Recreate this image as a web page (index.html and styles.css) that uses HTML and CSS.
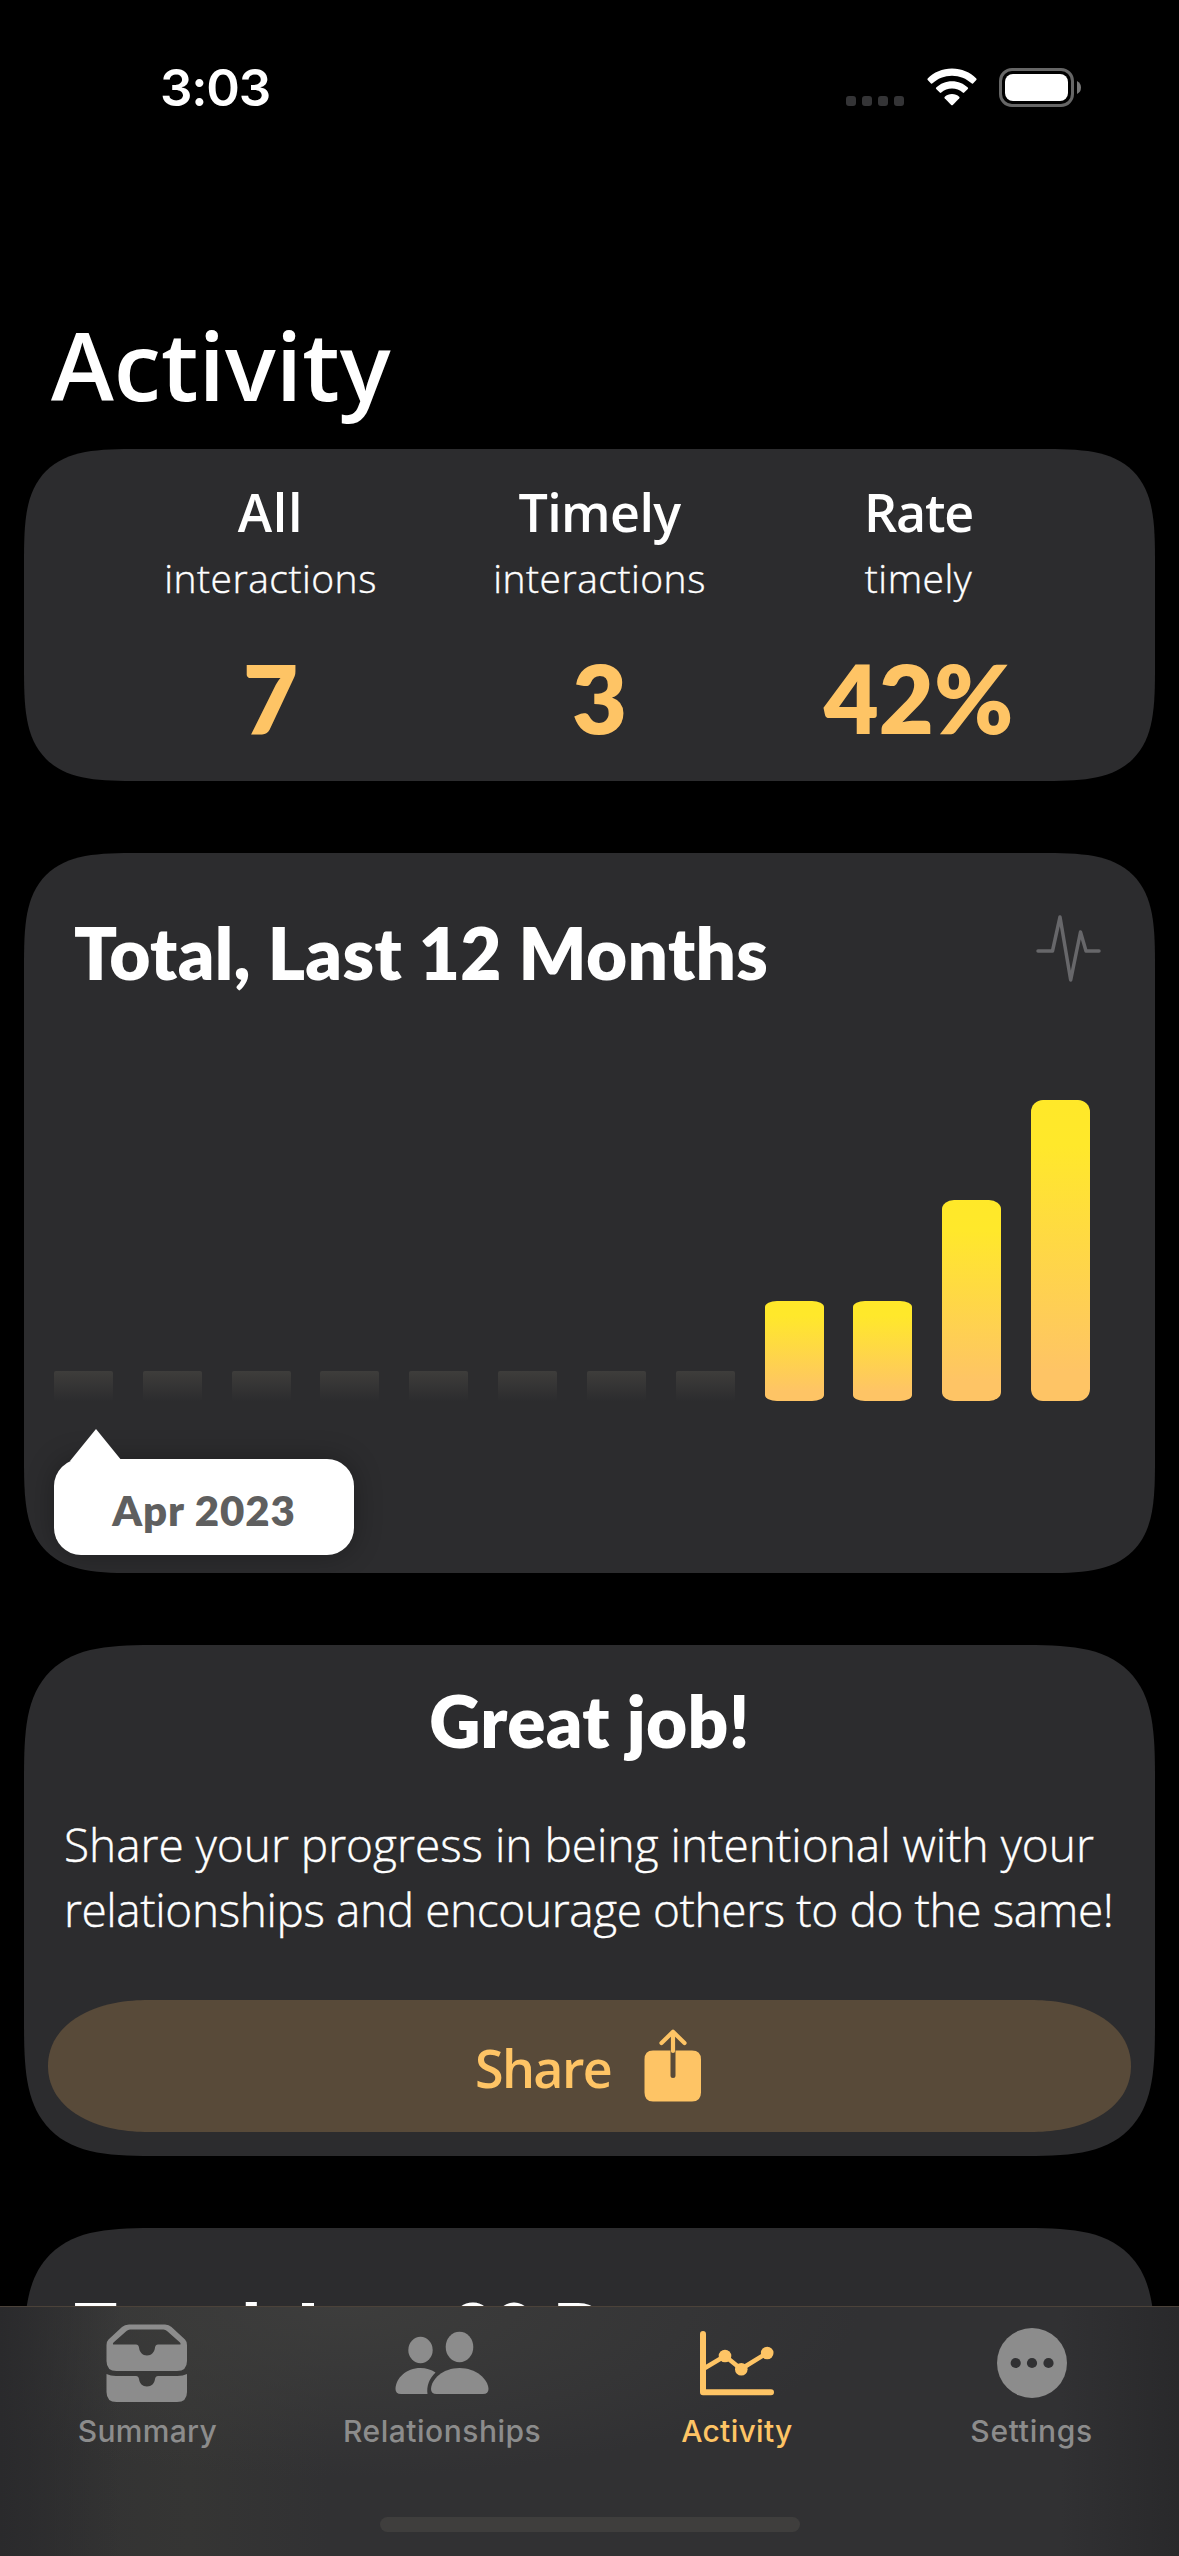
FILE: index.html
```html
<!DOCTYPE html>
<html lang="en">
<head>
<meta charset="utf-8">
<title>Activity</title>
<link rel="stylesheet" href="styles.css">
</head>
<body>
<div class="screen">
  <header class="status">
    <span class="time">3:03</span>
    <div class="status-icons">
      <div class="cell-dots"><i></i><i></i><i></i><i></i></div>
      <svg class="wifi" width="50" height="38" viewBox="0 0 50 38" fill="#fff">
        <path d="M25 0.5C34.600 0.500 43.300 4.300 49.300 10.500Q50 11.300 49.300 12L46 15.400Q45.300 16 44.500 15.300C39.400 10.500 32.500 7.700 25 7.700S10.600 10.500 5.500 15.300Q4.700 16 4 15.400L.700 12Q0 11.300 .700 10.500C6.700 4.300 15.400.500 25 .500Z"/>
        <path d="M25 13.200C31.200 13.200 36.700 15.600 40.800 19.500Q41.500 20.200 40.800 21L37.200 24.600Q36.500 25.200 35.700 24.600C32.800 22 29.100 20.500 25 20.500S17.200 22 14.300 24.600Q13.500 25.200 12.800 24.600L9.200 21Q8.500 20.200 9.200 19.500C13.300 15.600 18.800 13.200 25 13.200Z"/>
        <path d="M25 26C27.800 26 30.300 27 32.200 28.700Q33 29.500 32.300 30.300L25.800 36.900Q25 37.700 24.200 36.900L17.700 30.300Q17 29.500 17.800 28.700C19.700 27 22.200 26 25 26Z"/>
      </svg>
      <svg class="battery" width="82" height="39" viewBox="0 0 82 39">
        <rect x="1.500" y="1.500" width="72" height="36" rx="11.500" fill="none" stroke="#666" stroke-width="3"/>
        <rect x="6" y="6" width="63" height="27" rx="8" fill="#fff"/>
        <path d="M78 13Q82 15 82 19.500T78 26Z" fill="#777"/>
      </svg>
    </div>
  </header>

  <h1 class="page-title">Activity</h1>

  <main class="cards">
    <section class="card stats">
      <div class="stat">
        <h2 class="stat-name stat-name-all">All</h2>
        <p class="stat-unit">interactions</p>
        <p class="stat-value">7</p>
      </div>
      <div class="stat">
        <h2 class="stat-name stat-name-timely">Timely</h2>
        <p class="stat-unit">interactions</p>
        <p class="stat-value">3</p>
      </div>
      <div class="stat stat-rate">
        <h2 class="stat-name stat-name-rate">Rate</h2>
        <p class="stat-unit">timely</p>
        <p class="stat-value">42%</p>
      </div>
    </section>

    <section class="card total">
      <div class="card-head">
        <h2 class="card-title">Total, Last 12 Months</h2>
        <svg class="pulse" width="66" height="68" viewBox="0 0 66 68" fill="none" stroke="#67676a" stroke-width="3.500" stroke-linecap="round" stroke-linejoin="round">
          <path d="M2 37H16.500L24 3 34.700 66 44.500 18 50 37H63"/>
        </svg>
      </div>
      <div class="chart">
        <i class="bar empty"></i><i class="bar empty"></i><i class="bar empty"></i><i class="bar empty"></i>
        <i class="bar empty"></i><i class="bar empty"></i><i class="bar empty"></i><i class="bar empty"></i>
        <i class="bar one"></i><i class="bar one"></i><i class="bar two"></i><i class="bar three"></i>
      </div>
      <div class="tooltip">
        <svg class="tooltip-arrow" width="52" height="32" viewBox="0 0 52 32" fill="#fff"><path d="M0 32 26 0 52 32Z"/></svg>
        <span>Apr 2023</span>
      </div>
    </section>

    <section class="card praise">
      <h2 class="card-title praise-title">Great job!</h2>
      <p class="praise-text"><span class="line-a">Share your progress in being intentional with your</span><br><span class="line-b">relationships and encourage others to do the same!</span></p>
      <button class="share">
        <span>Share</span>
        <svg width="58" height="73" viewBox="0 0 58 73">
          <path fill="#fec465" d="M9 21.500H26.500V46.500A2.500 2.500 0 0 0 31.500 46.500V21.500H48Q57 21.500 57 30.500V63.500Q57 72.500 48 72.500H9Q.500 72.500 .500 63.500V30.500Q.500 21.500 9 21.500Z"/>
          <path d="M29 22V3M17.500 14 29 2.800 40.500 14" fill="none" stroke="#fec465" stroke-width="4.200" stroke-linecap="round" stroke-linejoin="round"/>
        </svg>
      </button>
    </section>

    <section class="card trend">
      <h2 class="card-title">Trend, Last 30 Days</h2>
    </section>
  </main>

  <nav class="tabbar">
    <div class="tabs">
      <a class="tab">
        <svg class="tab-icon" width="82" height="80" viewBox="0 0 82 80" fill="#8c8c8c">
          <path fill-rule="evenodd" d="M23 .500H59Q63 .500 65.500 3L79 15.500Q81 17.500 81 21V37Q81 47 71 47H10.500Q.500 47 .500 37V21Q.500 17.500 2.500 15.500L16 3Q18.500 .500 23 .500ZM24 5.500Q22 5.500 20.500 7L7.500 18.500Q6 20.500 8 20.500H30Q32.500 20.500 33 23.500C33.500 28 36.500 31.500 41 31.500S48.500 28 49 23.500Q49.500 20.500 52 20.500H73.500Q75.500 20.500 74 18.500L61 7Q59.500 5.500 57.500 5.500Z"/>
          <path d="M.500 50Q4.500 52 10 52H30Q32.500 52 33 55C33.500 59.500 36.500 62.500 41 62.500S48.500 59.500 49 55Q49.500 52 52 52H71.500Q77 52 81 50V68Q81 78 71 78H10.500Q.500 78 .500 68Z"/>
        </svg>
        <span>Summary</span>
      </a>
      <a class="tab">
        <svg class="tab-icon" width="94" height="80" viewBox="0 0 94 80" fill="#8c8c8c">
          <ellipse cx="25.500" cy="26" rx="12.200" ry="13.200"/>
          <ellipse cx="64.500" cy="23" rx="13.800" ry="15.200"/>
          <path d="M25.500 44Q34 44 40.500 48.500C34 55 31.500 62 32.500 70H6Q.500 70 .500 65C1 54 11 44 25.500 44Z"/>
          <path d="M64.500 44C81 44 93 55 93.500 65Q93.500 70 88 70H41.500Q36 70 36 65C36.500 55 48 44 64.500 44Z"/>
        </svg>
        <span class="label-relationships">Relationships</span>
      </a>
      <a class="tab active">
        <svg class="tab-icon" width="74" height="80" viewBox="0 0 74 80">
          <g fill="none" stroke="#fec465" stroke-linecap="round" stroke-linejoin="round">
            <path d="M3 10V68.300H71" stroke-width="6"/>
            <path d="M4 44.500 25 32 41 45 67 29" stroke-width="4.500"/>
          </g>
          <g fill="#fec465"><circle cx="25" cy="32" r="6.300"/><circle cx="41.300" cy="45.200" r="6.300"/><circle cx="67.200" cy="29" r="6.300"/></g>
        </svg>
        <span>Activity</span>
      </a>
      <a class="tab">
        <svg class="tab-icon" width="70" height="80" viewBox="0 0 70 80">
          <circle cx="35" cy="39" r="35" fill="#8c8c8c"/>
          <g fill="#313133"><circle cx="18.700" cy="39" r="5.100"/><circle cx="35" cy="39" r="5.100"/><circle cx="51.500" cy="39" r="5.100"/></g>
        </svg>
        <span class="label-settings">Settings</span>
      </a>
    </div>
    <div class="home-indicator"></div>
  </nav>
</div>
</body>
</html>
```
FILE: styles.css
```css
* { box-sizing: border-box; }

body, h1, h2, p { margin: 0; }

body {
  background: #000;
  color: #fff;
  font-family: "Open Sans", "Noto Sans", sans-serif;
  font-variant-ligatures: none;
}

.screen {
  width: 1179px;
  height: 2556px;
  display: flex;
  flex-direction: column;
  overflow: hidden;
  background: #000;
}

/* Status bar */
.status {
  flex: none;
  height: 177px;
  padding: 58px 98px 0 160px;
  display: flex;
  justify-content: space-between;
  align-items: flex-start;
}

.time {
  font: 600 51px/60px Inter, sans-serif;
  letter-spacing: -1.2px;
}

.status-icons {
  display: flex;
  align-items: flex-start;
  padding-top: 10px;
}

.cell-dots {
  display: flex;
  gap: 6px;
  margin: 28px 23px 0 0;
}

.cell-dots i {
  width: 10px;
  height: 10px;
  border-radius: 3px;
  background: #343436;
}

.wifi { margin-right: 22px; }

.page-title {
  flex: none;
  margin: 137px 0 35px;
  padding-left: 51px;
  font-size: 95px;
  font-weight: 600;
  line-height: 100px;
}

/* Cards */
.cards {
  flex: none;
  height: 1857px;
  padding: 0 24px;
  display: flex;
  flex-direction: column;
  gap: 72px;
  overflow: hidden;
}

.card {
  flex: none;
  background: #2c2c2e;
  border-radius: 115px;
  corner-shape: superellipse(1.7);
}

.card-title {
  font: 800 71px/80px Lato, sans-serif;
  letter-spacing: 0.35px;
  white-space: nowrap;
}

.stats {
  height: 332px;
  padding-top: 33px;
  display: flex;
  justify-content: center;
  gap: 119px;
}

.stat {
  width: 210px;
  display: flex;
  flex-direction: column;
  align-items: center;
  white-space: nowrap;
}

.stat-rate { width: 190px; }

.stat-name {
  font-size: 52px;
  font-weight: 600;
  line-height: 60px;
}

.stat-name-all { letter-spacing: 0.7px; }
.stat-name-timely { letter-spacing: -0.6px; }
.stat-name-rate { letter-spacing: -1.2px; }

.stat-unit {
  margin: 11px 0 44px;
  font-size: 39px;
  font-weight: 300;
  line-height: 50px;
  letter-spacing: 0.5px;
  -webkit-text-stroke: 0.4px currentColor;
}

.stat-value {
  font: 800 95px/100px Lato, sans-serif;
  color: #fec465;
}

.total {
  height: 720px;
  padding: 60px 30px 0;
}

.card-head {
  display: flex;
  justify-content: space-between;
  padding: 0 23px 0 20px;
}

.pulse { margin-top: 1px; }

.chart {
  height: 301px;
  margin-top: 107px;
  padding-right: 35px;
  display: flex;
  justify-content: space-between;
  align-items: flex-end;
}

.bar {
  width: 59px;
  border-radius: 12px;
  background: linear-gradient(#ffe829 0%, #ffe82b 15%, #fec465 90%);
}

.empty {
  height: 30px;
  border-radius: 2px;
  background: linear-gradient(#3e3d3b, #2c2c2e);
}

.one { height: 100px; border-radius: 12px / 6px; }
.two { height: 201px; border-radius: 12px / 9px; }
.three { height: 301px; }

.tooltip {
  position: relative;
  width: 300px;
  height: 96px;
  margin-top: 58px;
  border-radius: 27px;
  background: #fff;
  box-shadow: 0 0 28px rgba(0, 0, 0, 0.3);
  color: #5f5f5f;
  font: 800 42px/102px Lato, sans-serif;
  letter-spacing: 0.9px;
  text-align: center;
}

.tooltip-arrow {
  position: absolute;
  left: 16px;
  top: -30px;
}

.praise {
  height: 511px;
  padding: 36px 24px 0;
  border-radius: 137px;
}

.praise-title { text-align: center; }

.praise-text {
  margin: 51px 0 58px;
  padding-left: 16px;
  font-size: 46px;
  font-weight: 300;
  line-height: 65px;
  white-space: nowrap;
  -webkit-text-stroke: 0.4px currentColor;
}

.line-a { letter-spacing: 0; }
.line-b { letter-spacing: -0.4px; }

.share {
  width: 100%;
  height: 132px;
  padding: 0 2px 0 0;
  border: 0;
  border-radius: 100px / 66px;
  corner-shape: superellipse(1.1);
  background: #584a39;
  color: #fec465;
  display: flex;
  justify-content: center;
  align-items: center;
  gap: 33px;
  font: 600 52px/60px "Open Sans", sans-serif;
  letter-spacing: -1.6px;
}

.share span { margin-top: 4px; }
.share svg { margin-top: -1px; }

.trend {
  height: 720px;
  padding: 61px 50px 0;
  border-radius: 137px;
}

.trend .card-title { letter-spacing: 1px; }

/* Tab bar */
.tabbar {
  flex: none;
  height: 250px;
  border-top: 1px solid #4b4239;
  background:
    linear-gradient(90deg, #2a2a2c 0, rgba(42, 42, 44, 0) 120px, rgba(42, 42, 44, 0) 1060px, #29292b 1179px),
    radial-gradient(ellipse 520px 170px at 340px 0, #3d3d3c, rgba(57, 57, 56, 0)),
    linear-gradient(90deg, #313132, #353534 190px, #313133 330px);
  display: flex;
  flex-direction: column;
  align-items: center;
}

.tabs {
  width: 100%;
  display: grid;
  grid-template-columns: repeat(4, 1fr);
}

.tab {
  display: flex;
  flex-direction: column;
  align-items: center;
  padding-top: 17px;
  color: #8c8c8c;
  font: 500 30px/40px Inter, sans-serif;
  letter-spacing: 0.3px;
}

.tab.active { color: #fec465; }

.tab-icon { margin-bottom: 7px; }

.label-relationships { letter-spacing: 0.5px; }
.label-settings { letter-spacing: 0.7px; }

.home-indicator {
  width: 420px;
  height: 15px;
  margin-top: 66px;
  border-radius: 8px;
  background: #3f3e3d;
}
```
